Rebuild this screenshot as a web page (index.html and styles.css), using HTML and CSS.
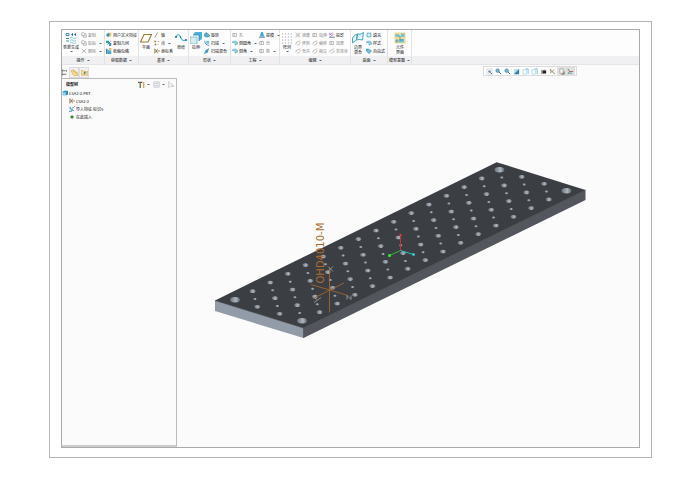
FILE: index.html
```
<!DOCTYPE html>
<html lang="zh-CN">
<head>
    <meta charset="UTF-8">
    <meta name="viewport" content="width=device-width, initial-scale=1.0">
    <title>CSA2-2.PRT</title>
    <link rel="stylesheet" href="styles.css">
</head>
<body>
    <!-- Shared icon shapes -->
    <svg class="symbols" aria-hidden="true">
        <symbol id="i-regen" viewBox="0 0 12 12"><path d="M1 1.500h3v2H1zM1 6.500h3M1 9h3" fill="none" stroke="#3f93bd" stroke-width="1"/><path d="M5 6q2-1.500 3 0t3 0M5 8.500q2-1.500 3 0t3 0M5 11q2-1.500 3 0t3 0" fill="none" stroke="#7cc4dc" stroke-width=".9"/><path d="M6 2.500l2-1.500v3zM9 2.500L11 1v3z" fill="#1f5c86"/></symbol>
        <symbol id="i-copy" viewBox="0 0 8 8"><path d="M1 1h3l1 1v3H1zM3 5v2h4V3L5 2" fill="none" stroke="currentColor" stroke-width=".7"/></symbol>
        <symbol id="i-cross" viewBox="0 0 8 8"><path d="M1 1l6 6M7 1L1 7" fill="none" stroke="currentColor" stroke-width=".8"/></symbol>
        <symbol id="i-udf" viewBox="0 0 8 8"><path d="M3 1h4v5H3z" fill="#e8c64f"/><path d="M0 4l3-3 2 2-2 4z" fill="#2b8cc9"/></symbol>
        <symbol id="i-geom" viewBox="0 0 8 8"><path d="M0 1h4v3H0zM4 4h3v4H4z" fill="#2f9cc4"/><path d="M2 6l4-4" stroke="#205878" stroke-width="1"/></symbol>
        <symbol id="i-wrap" viewBox="0 0 8 8"><path d="M0 1h2v7H0z" fill="#2b8cc9"/><path d="M2 1l3 3 2-2v6H2z" fill="#49a9cf"/><path d="M4 0h3v3H4z" fill="#e8b94f"/></symbol>
        <symbol id="i-plane" viewBox="0 0 12 12"><path d="M4 2.500h7.500L8 10H.5z" fill="#fffdf5" stroke="#9b7b3a" stroke-width="1.1"/></symbol>
        <symbol id="i-axis" viewBox="0 0 8 8"><path d="M1 7.500L5 .5" stroke="#9b7b3a" stroke-width="1"/></symbol>
        <symbol id="i-point" viewBox="0 0 8 8"><path d="M0 2h3M1.500.5v3M5 2h2M2 4.500v3M.5 6h3M5 6h1" stroke="#9b7b3a" stroke-width=".9"/></symbol>
        <symbol id="i-csys" viewBox="0 0 8 8"><path d="M1 1l4 6M1 7l4-6M3 4h5M1 1v6" fill="none" stroke="#7d6434" stroke-width=".9"/></symbol>
        <symbol id="i-sketch" viewBox="0 0 12 12"><path d="M1 5q2.500-5 4.500 0t5.500 3" fill="none" stroke="#43b7d8" stroke-width="1.2"/><path d="M0 5h2M10 8h2M5 5h1" stroke="#28698f" stroke-width="1.4"/></symbol>
        <symbol id="i-extrude" viewBox="0 0 12 12"><path d="M0 5h7v7H0z" fill="#d5edf5" stroke="#69a9c0" stroke-width=".7"/><path d="M3 3l2-3h7v7l-3 2V3z" fill="#48b3d5"/><path d="M3 3h6v6" fill="none" stroke="#2b7fa3" stroke-width=".7"/></symbol>
        <symbol id="i-shape" viewBox="0 0 8 8"><path d="M0 4q1-3 4-3l4 4q-3 3-7 1z" fill="#58b4d2" stroke="#277da0" stroke-width=".7"/></symbol>
        <symbol id="i-sweep" viewBox="0 0 8 8"><path d="M1 1q0 6 6 6" fill="none" stroke="#277da0" stroke-width="1"/><path d="M3 1h4v4H3z" fill="#6ec6df"/></symbol>
        <symbol id="i-blend" viewBox="0 0 8 8"><path d="M0 8l2-5 5-3-2 6z" fill="#3e9dc2"/></symbol>
        <symbol id="i-round" viewBox="0 0 8 8"><path d="M0 3q6-4 8 2L4 7V4z" fill="#8fd4e8" stroke="#48a4c2" stroke-width=".7"/></symbol>
        <symbol id="i-draft" viewBox="0 0 8 8"><path d="M1 6h6L5 0H3z" fill="#45a9cd"/><path d="M0 7h8" stroke="#245a80"/></symbol>
        <symbol id="i-hole" viewBox="0 0 8 8"><path d="M1 2h5v4H1zM3 2v4" fill="none" stroke="currentColor" stroke-width=".7"/></symbol>
        <symbol id="i-pattern" viewBox="0 0 12 12"><path d="M1 2h10M1 5h10M1 8h10M1 11h10" stroke="#a4a8ad" stroke-width="1.2" stroke-dasharray="1.2 1.7"/></symbol>
        <symbol id="i-mirror" viewBox="0 0 8 8"><path d="M1 1l2 3-2 3M7 1L5 4l2 3M4 1v6" fill="none" stroke="currentColor" stroke-width=".7"/></symbol>
        <symbol id="i-trim" viewBox="0 0 8 8"><path d="M1 6q0-4 4-4l2-1M3 7q3 0 4-4" fill="none" stroke="currentColor" stroke-width=".7"/></symbol>
        <symbol id="i-project" viewBox="0 0 8 8"><path d="M1 1v3l4-3M2 6l4-3" fill="none" stroke="#a34fb5" stroke-width="1"/><path d="M0 7h8" stroke="#49637c"/></symbol>
        <symbol id="i-boundary" viewBox="0 0 12 12"><path d="M.5 6q2-4 5-4L4.500 8 .5 11zM5.500 2q3 1 6-1.500L10.500 8Q7 7 4.500 8z" fill="#e2f5f9" stroke="#40a9c9" stroke-width="1"/></symbol>
        <symbol id="i-fill" viewBox="0 0 8 8"><path d="M1.500 1.500h5v5h-5z" fill="#d9f2f7" stroke="#35a1c5"/></symbol>
        <symbol id="i-free" viewBox="0 0 8 8"><path d="M0 1h4l4 3-4 4-4-4z" fill="#40a6ca"/><path d="M4 1v6M1 4h6" stroke="#cbeaf3" stroke-width=".6"/></symbol>
        <symbol id="i-component" viewBox="0 0 12 12"><path d="M.5.5h11v11H.5z" fill="#f4d993"/><path d="M1.500 2h3v3h-3zM7 1.500h3.500V5H7zM5 7h5v3.500H5z" fill="#6ec3de"/><path d="M4 4h2v4h3M2 8h2v2H2z" fill="none" stroke="#3b91ad" stroke-width=".7"/></symbol>
        <symbol id="i-tree" viewBox="0 0 8 8"><path d="M0 0v8M0 2h4M0 6h5M5 1v2" fill="none" stroke="#555" stroke-width=".9"/></symbol>
        <symbol id="i-layers" viewBox="0 0 8 8"><path d="M0 2l3-1 5 4-1 3-4-1z" fill="#fbe3a0" stroke="#d5a545" stroke-width=".8"/><path d="M2 2l5 4" stroke="#bd8c37" stroke-width=".7"/></symbol>
        <symbol id="i-folder" viewBox="0 0 8 8"><path d="M0 2h3l1 1h4v4H1z" fill="#fbe3a0" stroke="#d5a545" stroke-width=".8"/><path d="M4 3v3M3 4.500h3" stroke="#3784a5" stroke-width="1"/></symbol>
        <symbol id="i-tools" viewBox="0 0 8 8"><path d="M0 1.500h5M2.500 1v7" stroke="#695c42" stroke-width="1.400"/><path d="M6.500 1v7" stroke="#dda13e" stroke-width="1.400"/></symbol>
        <symbol id="i-list" viewBox="0 0 8 8"><path d="M1 1h6v6H1zM2 3h4M2 5h4" fill="none" stroke="#a3abb3" stroke-width=".7"/></symbol>
        <symbol id="i-expand" viewBox="0 0 8 8"><path d="M1 0v8M3 2l3 4M3 6h4" fill="none" stroke="#a3abb3" stroke-width=".8"/></symbol>
        <symbol id="i-part" viewBox="0 0 8 8"><path d="M1 2l2-1h5v5L6 7H1z" fill="#2b93c4"/><path d="M1 3h4v4H1z" fill="#8fd4e8"/></symbol>
        <symbol id="i-import" viewBox="0 0 8 8"><path d="M2 1q-2 3 1 3t0 3H0" fill="none" stroke="#3a8fc0" stroke-width="1.400"/><path d="M4 2h1M5 3l3-3M5 6h2" stroke="#3a8fc0" stroke-width="1"/></symbol>
        <symbol id="i-zoom" viewBox="0 0 8 8"><circle cx="3" cy="3" r="2" fill="#72b7d1" stroke="#477d99" stroke-width=".8"/><path d="M4.500 4.500L7 7" stroke="#34536b"/></symbol>
        <symbol id="i-fit" viewBox="0 0 8 8"><path d="M1 1h6v6H1z" fill="none" stroke="#c0c8cd" stroke-width=".7"/><circle cx="4" cy="4" r="1.500" fill="#6398b0"/><path d="M5 5l2 2" stroke="#34536b"/></symbol>
        <symbol id="i-repaint" viewBox="0 0 8 8"><path d="M1 1h6v6H1z" fill="#b8e1ec"/><path d="M7 1v6H1z" fill="#367f9e"/></symbol>
        <symbol id="i-view" viewBox="0 0 8 8"><path d="M1 2h4v5H1z" fill="#fff" stroke="#a5d5e2" stroke-width=".8"/><path d="M4 1h3v6" fill="none" stroke="#4ba6c4" stroke-width=".8"/></symbol>
        <symbol id="i-camera" viewBox="0 0 8 8"><path d="M1 2h6v5H1z" fill="#aaa"/><path d="M3 3h4v3H3z" fill="#222"/></symbol>
        <symbol id="i-datum" viewBox="0 0 8 8"><path d="M1 2l6 5M2 1v3M1 6l5-4" stroke="#8f7c50" stroke-width=".9"/></symbol>
        <symbol id="i-annot" viewBox="0 0 8 8"><path d="M2 1h4v5H2z" fill="#f4f4f4" stroke="#99917f" stroke-width=".7"/><path d="M4 7h3V4" fill="none" stroke="#544b3c" stroke-width=".9"/></symbol>
        <symbol id="i-spin" viewBox="0 0 8 8"><path d="M1 1l2 3-2 3" fill="none" stroke="#3c8361"/><path d="M3 4h4" stroke="#c64848"/><path d="M3 6h3" stroke="#3d9bb8"/></symbol>
    </svg>

    <main class="frame">
        <div class="app">
            <nav class="ribbon" id="ribbon" aria-label="功能区"></nav>

            <div class="workspace">
                <aside class="sidebar">
                    <div class="tabs">
                        <button class="tab active" aria-label="模型树"><svg><use href="#i-tree"/></svg></button>
                        <button class="tab" aria-label="层"><svg><use href="#i-layers"/></svg></button>
                        <button class="tab" aria-label="文件夹"><svg><use href="#i-folder"/></svg></button>
                    </div>
                    <section class="tree-panel">
                        <header class="tree-header">
                            <h2>模型树</h2>
                            <button aria-label="设置"><svg><use href="#i-tools"/></svg><i class="caret"></i></button>
                            <button aria-label="显示"><svg><use href="#i-list"/></svg><i class="caret"></i></button>
                            <button aria-label="展开"><svg><use href="#i-expand"/></svg></button>
                        </header>
                        <ul class="tree">
                            <li class="root"><svg><use href="#i-part"/></svg>CSA2-2.PRT</li>
                            <li><svg><use href="#i-csys"/></svg>CSA2-2</li>
                            <li><svg><use href="#i-import"/></svg>导入特征 标识5</li>
                            <li><svg viewBox="0 0 8 8"><path d="M4 2l2 2-2 2-2-2z" fill="#267d1d" stroke="#267d1d"/></svg>在此插入</li>
                        </ul>
                    </section>
                </aside>

                <section class="viewport">
                    <div class="view-tools" id="viewTools"></div>
                    <svg class="model" viewBox="177 79 462 367" role="img" aria-label="OHD4010-M">
                        <defs>
                            <linearGradient id="bore">
                                <stop offset="0" stop-color="#646b73"/>
                                <stop offset=".35" stop-color="#929ba4"/>
                                <stop offset=".6" stop-color="#adb6bf"/>
                                <stop offset="1" stop-color="#5c636b"/>
                            </linearGradient>
                        </defs>
                        <path d="M215 300l88.500 27.500v10L215 310.500z" fill="#929ba8"/>
                        <path d="M303.500 327.500l282-138v10l-282 138z" fill="#53565d"/>
                        <path d="M215 300L496.700 161.700l88.800 27.800-282 138z" fill="#3b3e43"/>
                        <path d="M215 300l88.500 27.500v10M303.500 327.500l282-138" fill="none" stroke="#2d3034" stroke-width=".5"/>
                        <g id="holes" fill="url(#bore)"></g>
                        <path d="M329.500 267v45M311 284l37 11M313 298l31-15.500" fill="none" stroke="#a0672f" stroke-width=".9"/>
                        <path d="M328 266l5 5M333 266l-5 5M314 297l3 2M321 297l-7 5M347 299v-4l4 4v-4" fill="none" stroke="#999" stroke-width=".9"/>
                        <text class="part-name" transform="translate(324 283) rotate(-90)">OHD4010-M</text>
                        <path d="M400.500 250v-16" stroke="#c83238"/>
                        <path d="M400.500 250l-11 5" stroke="#35b93c"/>
                        <path d="M400.500 250l13 4" stroke="#32bac7"/>
                        <circle cx="400.500" cy="234.500" r="1.200" fill="#f03137"/>
                        <circle cx="389.500" cy="255" r="1.500" fill="#37ed35"/>
                        <circle cx="413.500" cy="254" r="1.300" fill="#39e5ed"/>
                    </svg>
                </section>
            </div>
        </div>
    </main>
    <script src="script.js"></script>
</body>
</html>
```
FILE: styles.css
```
* {
    box-sizing: border-box;
}
body {
    margin: 0;
    padding: 21px 48px 20px 49px;
    height: 100vh;
    background-color: #fff;
    color: #111;
    font-family: "Noto Sans CJK SC", sans-serif;
    font-size: 4px;
    line-height: 8px;
}
button {
    display: flex;
    align-items: center;
    margin: 0;
    padding: 0;
    border: none;
    background: none;
    color: inherit;
    font: inherit;
    white-space: nowrap;
}
svg {
    flex: none;
    width: 6px;
    height: 6px;
}
.symbols {
    position: absolute;
    width: 0;
    height: 0;
}
.frame {
    height: 100%;
    padding: 7px 11px 9px;
    border: 1px solid #b5b5b5;
}
.app {
    display: flex;
    flex-direction: column;
    height: 100%;
    border: 1px solid #aaa;
    background-color: #fbfbfb;
    overflow: hidden;
}

/* Ribbon */
.ribbon {
    display: flex;
    flex: none;
    height: 35px;
    border-bottom: 1px solid #e5e5e8;
    background: linear-gradient(#fdfdfd 26px, #f0f0f3 26px);
}
.group {
    display: flex;
    flex: none;
    flex-direction: column;
    border-right: 1px solid #e3e3e6;
}
.group-body {
    display: flex;
    height: 26px;
    padding: 1px 0 0 1px;
    gap: 2px;
}
.group-name {
    justify-content: center;
    height: 8px;
}
.large {
    flex-direction: column;
    min-width: 12px;
    line-height: 5px;
    text-align: center;
    white-space: pre;
}
.large:only-child {
    margin: 0 auto;
}
.large svg {
    width: 12px;
    height: 12px;
    margin: 1px 0;
}
.large .caret {
    margin: 1px 0 0;
}
.column {
    display: flex;
    flex-direction: column;
}
.column button {
    height: 8px;
    gap: 1px;
}
.disabled {
    color: #888;
}
.caret {
    width: 3px;
    margin-left: 2px;
    border: 1px solid transparent;
    border-top-color: #666;
    border-bottom: none;
}

/* Model tree */
.workspace {
    display: flex;
    flex: 1;
    min-height: 0;
}
.sidebar {
    display: flex;
    flex: none;
    flex-direction: column;
    width: 115px;
    padding-top: 2px;
}
.tabs {
    display: flex;
    height: 11px;
}
.tab {
    justify-content: center;
    width: 10px;
    border: 1px solid #ddd;
    background-color: #f1f1f1;
}
.tab svg {
    width: 7px;
    height: 7px;
}
.tab.active {
    width: 7px;
    border-color: transparent;
    background-color: #fbfbfb;
}
.tree-panel {
    flex: 1;
    border: 1px solid #bbb;
    border-left: none;
    border-bottom: 2px solid #ccc;
}
.tree-header {
    display: flex;
    align-items: center;
    height: 10px;
    gap: 3px;
    padding: 0 1px 0 4px;
}
.tree-header h2 {
    flex: 1;
    margin: 0;
    font-size: 4px;
}
.tree-header svg {
    width: 7px;
    height: 7px;
}
.tree {
    margin: 0;
    padding: 0;
    list-style: none;
}
.tree li {
    display: flex;
    align-items: center;
    height: 8px;
    gap: 1px;
    padding-left: 7px;
}
.tree .root {
    padding-left: 0;
}

/* Graphics area */
.viewport {
    position: relative;
    flex: 1;
    min-width: 0;
    padding-top: 14px;
}
.view-tools {
    position: absolute;
    top: 1px;
    right: 62px;
    display: flex;
    padding: 0 1px;
    border: 1px solid #ddd;
    background-color: #fff;
}
.view-tools button {
    justify-content: center;
    width: 9px;
    height: 8px;
}
.view-tools svg {
    width: 7px;
    height: 7px;
}
.view-tools .pressed {
    background-color: #e0e0e0;
}
.model {
    display: block;
    width: 100%;
    height: 100%;
}
.part-name {
    fill: #b06c2e;
    font-family: "DejaVu Sans", sans-serif;
    font-size: 10px;
}
```
FILE: script.js
```
// ">" after a name adds a menu arrow, "-" before it greys the command out
const groups = [
    { name: '操作', width: 43, items: [
        ['i-regen', '重新生成>'],
        [['i-copy', '-复制'], ['i-copy', '-粘贴>'], ['i-cross', '-删除>']]
    ] },
    { name: '获取数据', width: 34, items: [
        [['i-udf', '用户定义特征'], ['i-geom', '复制几何'], ['i-wrap', '收缩包络']]
    ] },
    { name: '基准', width: 50, items: [
        ['i-plane', '平面'],
        [['i-axis', '轴'], ['i-point', '点>'], ['i-csys', '坐标系']],
        ['i-sketch', '草绘']
    ] },
    { name: '形状', width: 42, items: [
        ['i-extrude', '拉伸'],
        [['i-shape', '旋转'], ['i-sweep', '扫描>'], ['i-blend', '扫描混合']]
    ] },
    { name: '工程', width: 49, items: [
        [['i-hole', '-孔'], ['i-round', '倒圆角>'], ['i-round', '倒角>']],
        [['i-draft', '拔模>'], ['i-hole', '-壳'], ['i-hole', '-筋>']]
    ] },
    { name: '编辑', width: 71, items: [
        ['i-pattern', '阵列>'],
        [['i-mirror', '-镜像'], ['i-trim', '-修剪'], ['i-trim', '-合并']],
        [['i-hole', '-延伸'], ['i-trim', '-偏移'], ['i-trim', '-相交']],
        [['i-project', '投影'], ['i-hole', '-加厚'], ['i-trim', '-实体化']]
    ] },
    { name: '曲面', width: 37, items: [
        ['i-boundary', '边界\n混合'],
        [['i-fill', '填充'], ['i-round', '样式'], ['i-free', '自由式']]
    ] },
    { name: '模型意图', width: 24, items: [
        ['i-component', '元件\n界面']
    ] }
];

function icon(id) {
    return `<svg><use href="#${id}"/></svg>`;
}

function command([id, text], className = '') {
    if (text.startsWith('-')) {
        className += ' disabled';
    }
    const label = text.replace(/^-|>$/g, '');
    const caret = text.endsWith('>') ? '<i class="caret"></i>' : '';
    return `<button class="${className.trim()}">${icon(id)}<span>${label}</span>${caret}</button>`;
}

document.getElementById('ribbon').innerHTML = groups.map(group => {
    const body = group.items.map(item => Array.isArray(item[0])
        ? `<div class="column">${item.map(entry => command(entry)).join('')}</div>`
        : command(item, 'large')).join('');
    return `<div class="group" style="width: ${group.width}px">
        <div class="group-body">${body}</div>
        <button class="group-name">${group.name}<i class="caret"></i></button>
    </div>`;
}).join('');

const tools = [
    ['fit', '重新调整'], ['zoom', '放大'], ['zoom', '缩小'], ['repaint', '重画'],
    ['view', '显示样式'], ['view', '已保存方向'], ['camera', '视图管理器'],
    ['datum', '基准显示'], ['annot', '注释显示'], ['spin', '旋转中心']
];
document.getElementById('viewTools').innerHTML = tools.map(([id, label], index) =>
    `<button aria-label="${label}"${index > 7 ? ' class="pressed"' : ''}>${icon('i-' + id)}</button>`).join('');

// Mounting holes: 16 x 4 grid, with a smaller hole in the middle of each cell
let holes = '';
function addHole(col, row, rx, ry) {
    const x = 235 + col * 17.63 + row * 22.33;
    const y = 299.3 - col * 8.67 + row * 7;
    holes += `<ellipse cx="${x}" cy="${y}" rx="${rx}" ry="${ry}"/>`;
}
for (let col = 0; col < 16; col++) {
    for (let row = 0; row < 4; row++) {
        const corner = col % 15 === 0 && row % 3 === 0;
        addHole(col, row, corner ? 5 : 3, corner ? 2.7 : 1.8);
        if (col < 15 && row < 3) {
            addHole(col + 0.5, row + 0.5, 1.8, 1);
        }
    }
}
document.getElementById('holes').innerHTML = holes;
```
